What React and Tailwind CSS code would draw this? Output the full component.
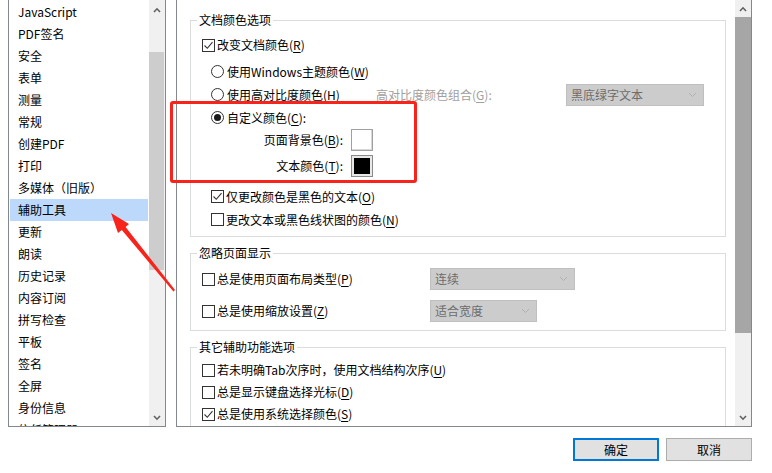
import React from 'react';

const items = [
  'JavaScript', 'PDF签名', '安全', '表单', '测量', '常规', '创建PDF', '打印',
  '多媒体（旧版）', '辅助工具', '更新', '朗读', '历史记录', '内容订阅', '拼写检查',
  '平板', '签名', '全屏', '身份信息', '信任管理器',
];

const Key = ({ k }) => (
  <span>
    (<span className="underline underline-offset-2">{k}</span>)
  </span>
);

const Chevron = ({ up }) => (
  <svg width="8" height="6" viewBox="0 0 8 6">
    <path d={up ? 'M1 5 L4 1.8 L7 5' : 'M1 1 L4 4.2 L7 1'} fill="none" stroke="#606060" strokeWidth="1.6" />
  </svg>
);

const Check = ({ checked }) => (
  <span className="w-[13px] h-[13px] shrink-0 border border-[#333] bg-white flex items-center justify-center">
    {checked && (
      <svg width="11" height="11" viewBox="0 0 11 11">
        <path d="M1.5 5.5 L4.3 8.3 L9.5 2.2" fill="none" stroke="#333" strokeWidth="1.1" />
      </svg>
    )}
  </span>
);

const Radio = ({ checked }) => (
  <span className="w-[13px] h-[13px] shrink-0 rounded-full border border-[#333] bg-white flex items-center justify-center">
    {checked && <span className="w-[7px] h-[7px] rounded-full bg-[#1a1a1a]" />}
  </span>
);

const Select = ({ text, w }) => (
  <div className={`h-[22px] shrink-0 ${w} bg-[#cccccc] border border-[#bfbfbf] flex items-center justify-between pl-[4px] pr-[6px] text-[#6d6d6d]`}>
    <span>{text}</span>
    <svg width="9" height="6" viewBox="0 0 9 6">
      <path d="M1 1 L4.5 4.5 L8 1" fill="none" stroke="#b0b0b0" strokeWidth="1" />
    </svg>
  </div>
);

const Group = ({ title, className, children }) => (
  <fieldset className={`ml-[13px] mr-[9px] border border-[#dcdcdc] px-0 ${className}`}>
    <legend className="ml-[6px] px-[2px] leading-[16px]">{title}</legend>
    {children}
  </fieldset>
);

export default function App() {
  return (
    <div className="relative w-[772px] h-[473px] bg-white overflow-hidden text-[12px] text-black font-['Noto_Sans_CJK_SC','Liberation_Sans',sans-serif]">
      <div className="flex h-[427px]">
        {/* category list */}
        <div className="ml-[8px] w-[158px] h-full border-x border-b border-[#828790] flex">
          <div className="flex-1 flex flex-col overflow-hidden pt-px">
            {items.map((t, i) => (
              <div
                key={t}
                className={`mx-px h-[22px] shrink-0 pl-[8px] leading-[22px] ${i === 9 ? 'bg-[#bcd8fb]' : ''}`}
              >
                {t}
              </div>
            ))}
          </div>
          <div className="w-[16px] bg-[#f0f0f0] flex flex-col">
            <div className="h-[20px] flex items-center justify-center"><Chevron up /></div>
            <div className="mt-[32px] h-[218px] mr-px bg-[#cdcdcd]" />
            <div className="flex-1" />
            <div className="h-[17px] flex items-center justify-center"><Chevron /></div>
          </div>
        </div>

        {/* settings panel */}
        <div className="ml-[10px] w-[576px] h-full border-x border-b border-[#828790] flex">
          <div className="flex-1 flex flex-col overflow-hidden">
            <Group title="文档颜色选项" className="mt-[12px] pb-[5px] shrink-0">
              <div className="mt-[6px] ml-[11px] h-[22px] flex items-center gap-[2px]">
                <Check checked />
                <span>改变文档颜色<Key k="R" /></span>
              </div>
              <div className="mt-[4px] ml-[20px] h-[23px] flex items-center gap-[3px]">
                <Radio />
                <span>使用Windows主题颜色<Key k="W" /></span>
              </div>
              <div className="ml-[20px] h-[23px] flex items-center">
                <Radio />
                <span className="ml-[3px] w-[149px] shrink-0">使用高对比度颜色<Key k="H" /></span>
                <span className="w-[190px] shrink-0 text-[#a0a0a0]">高对比度颜色组合<Key k="G" />:</span>
                <Select text="黑底绿字文本" w="w-[138px]" />
              </div>
              <div className="ml-[20px] h-[23px] flex items-center gap-[3px]">
                <Radio checked />
                <span>自定义颜色<Key k="C" />:</span>
              </div>
              <div className="h-[22px] flex items-center">
                <span className="w-[152px] text-right">页面背景色<Key k="B" />:</span>
                <span className="ml-[8px] w-[22px] h-[22px] border border-[#a0a0a0] bg-white shadow-[inset_-1px_-1px_0_#d8d8d8]" />
              </div>
              <div className="mt-[4px] h-[22px] flex items-center">
                <span className="w-[152px] text-right">文本颜色<Key k="T" />:</span>
                <span className="ml-[8px] w-[22px] h-[22px] border border-[#8a8a8a] p-[2px] bg-[#e8e8e8]">
                  <span className="block w-full h-full bg-black" />
                </span>
              </div>
              <div className="mt-[8px] ml-[20px] h-[23px] flex items-center gap-[2px]">
                <Check checked />
                <span>仅更改颜色是黑色的文本<Key k="O" /></span>
              </div>
              <div className="ml-[20px] h-[23px] flex items-center gap-[2px]">
                <Check />
                <span>更改文本或黑色线状图的颜色<Key k="N" /></span>
              </div>
            </Group>

            <Group title="忽略页面显示" className="mt-[8px] pb-[8px] shrink-0">
              <div className="mt-[7px] ml-[11px] h-[22px] flex items-center">
                <Check />
                <span className="ml-[2px] w-[213px] shrink-0">总是使用页面布局类型<Key k="P" /></span>
                <Select text="连续" w="w-[145px]" />
              </div>
              <div className="mt-[10px] ml-[11px] h-[22px] flex items-center">
                <Check />
                <span className="ml-[2px] w-[213px] shrink-0">总是使用缩放设置<Key k="Z" /></span>
                <Select text="适合宽度" w="w-[107px]" />
              </div>
            </Group>

            <Group title="其它辅助功能选项" className="mt-[8px] pb-[8px] shrink-0">
              <div className="mt-[4px] ml-[11px] h-[22px] flex items-center gap-[2px]">
                <Check />
                <span>若未明确Tab次序时，使用文档结构次序<Key k="U" /></span>
              </div>
              <div className="ml-[11px] h-[22px] flex items-center gap-[2px]">
                <Check />
                <span>总是显示键盘选择光标<Key k="D" /></span>
              </div>
              <div className="ml-[11px] h-[22px] flex items-center gap-[2px]">
                <Check checked />
                <span>总是使用系统选择颜色<Key k="S" /></span>
              </div>
            </Group>
          </div>
          <div className="w-[16px] bg-[#f0f0f0] flex flex-col">
            <div className="h-[17px] flex items-center justify-center"><Chevron up /></div>
            <div className="h-[316px] bg-[#a6a6a6]" />
            <div className="flex-1" />
            <div className="h-[17px] flex items-center justify-center"><Chevron /></div>
          </div>
        </div>
      </div>

      {/* buttons */}
      <div className="mt-[11px] mr-[20px] flex justify-end gap-[7px]">
        <button className="w-[86px] h-[23px] border-2 border-[#0078d7] bg-[#e1e1e1] flex items-center justify-center">确定</button>
        <button className="w-[86px] h-[23px] border border-[#adadad] bg-[#e1e1e1] flex items-center justify-center">取消</button>
      </div>

      {/* annotations */}
      <div className="absolute left-[170px] top-[101px] w-[247px] h-[82px] border-[3px] border-[#f8231b] rounded-[3px] pointer-events-none" />
      <svg className="absolute left-0 top-0 pointer-events-none" width="772" height="473">
        <polygon
          points="111,213 129,224 125.6,226.9 175,290 173.4,291.4 121.8,230.1 118,233"
          fill="#f8231b"
        />
      </svg>
    </div>
  );
}
